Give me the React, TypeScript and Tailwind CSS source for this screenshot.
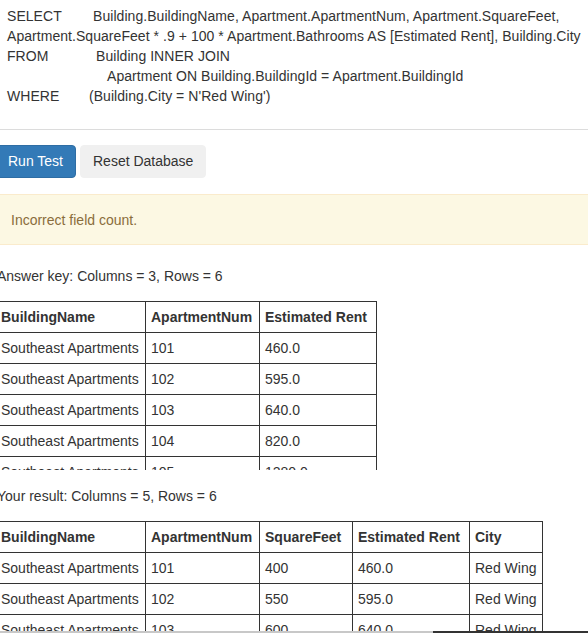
const answerRows = [
  ["Southeast Apartments", "101", "460.0"],
  ["Southeast Apartments", "102", "595.0"],
  ["Southeast Apartments", "103", "640.0"],
  ["Southeast Apartments", "104", "820.0"],
  ["Southeast Apartments", "105", "1280.0"],
  ["Southeast Apartments", "106", "1320.0"],
];

const resultRows = [
  ["Southeast Apartments", "101", "400", "460.0", "Red Wing"],
  ["Southeast Apartments", "102", "550", "595.0", "Red Wing"],
  ["Southeast Apartments", "103", "600", "640.0", "Red Wing"],
  ["Southeast Apartments", "104", "800", "820.0", "Red Wing"],
];

type Col = { label: string; cls: string };

function ResultTable({ headers, rows }: { headers: Col[]; rows: string[][] }) {
  return (
    <table className="border-collapse">
      <thead>
        <tr>
          {headers.map((h) => (
            <th key={h.label} className="border border-[#333] px-[5px] py-[5px] text-left font-bold leading-[20px] whitespace-nowrap">
              <div className={h.cls}>{h.label}</div>
            </th>
          ))}
        </tr>
      </thead>
      <tbody>
        {rows.map((r, i) => (
          <tr key={i}>
            {r.map((c, j) => (
              <td key={j} className="border border-[#333] px-[5px] py-[5px] leading-[20px] whitespace-nowrap">
                {c}
              </td>
            ))}
          </tr>
        ))}
      </tbody>
    </table>
  );
}

export default function App() {
  return (
    <div className="w-[588px] h-[633px] overflow-hidden bg-white text-[14px] text-[#333] font-['Liberation_Sans',Arial,sans-serif]">
      <div className="-ml-[5px] w-[610px]">
        {/* query */}
        <div className="pl-[12px] pt-[6px] pb-[23px] leading-[20px] whitespace-nowrap tracking-[0.05px]">
          <div className="flex">
            <span className="w-[86px]">SELECT</span>
            <span>Building.BuildingName, Apartment.ApartmentNum, Apartment.SquareFeet,</span>
          </div>
          <div>Apartment.SquareFeet * .9 + 100 * Apartment.Bathrooms AS [Estimated Rent], Building.City</div>
          <div className="flex">
            <span className="w-[89px]">FROM</span>
            <span>Building INNER JOIN</span>
          </div>
          <div className="pl-[100px]">Apartment ON Building.BuildingId = Apartment.BuildingId</div>
          <div className="flex">
            <span className="w-[82px]">WHERE</span>
            <span>(Building.City = N'Red Wing')</span>
          </div>
        </div>
        <div className="h-px bg-[#dcdcdc]" />

        <div className="mt-[15px] flex gap-[4px]">
          <button className="h-[33px] px-[12px] rounded-[4px] bg-[#337ab7] text-white border border-[#2e6da4]">Run Test</button>
          <button className="h-[33px] px-[12px] rounded-[4px] bg-[#f0f0f0] text-[#333] border border-[#f0f0f0]">Reset Database</button>
        </div>

        <div className="mt-[16px] h-[51px] flex items-center pt-px px-[15px] bg-[#fcf8e3] border border-[#faebcc] text-[#8a6d3b]">
          Incorrect field count.
        </div>

        <div className="mt-[21px] leading-[20px] pl-[2px]">Answer key: Columns = 3, Rows = 6</div>
        <div className="mt-[15px] h-[169px] overflow-hidden">
          <ResultTable
            headers={[
              { label: "BuildingName", cls: "w-[139px]" },
              { label: "ApartmentNum", cls: "w-[103px]" },
              { label: "Estimated Rent", cls: "w-[106px]" },
            ]}
            rows={answerRows}
          />
        </div>

        <div className="mt-[16px] leading-[20px] pl-[2px]">Your result: Columns = 5, Rows = 6</div>
        <div className="mt-[15px] h-[110px] overflow-hidden">
          <ResultTable
            headers={[
              { label: "BuildingName", cls: "w-[139px]" },
              { label: "ApartmentNum", cls: "w-[103px]" },
              { label: "SquareFeet", cls: "w-[82px]" },
              { label: "Estimated Rent", cls: "w-[106px]" },
              { label: "City", cls: "w-[62px]" },
            ]}
            rows={resultRows}
          />
        </div>
        <div className="flex h-[2px]">
          <div className="w-[438px] bg-[#c8c8c8]" />
          <div className="flex-1 bg-[#333]" />
        </div>
      </div>
    </div>
  );
}
